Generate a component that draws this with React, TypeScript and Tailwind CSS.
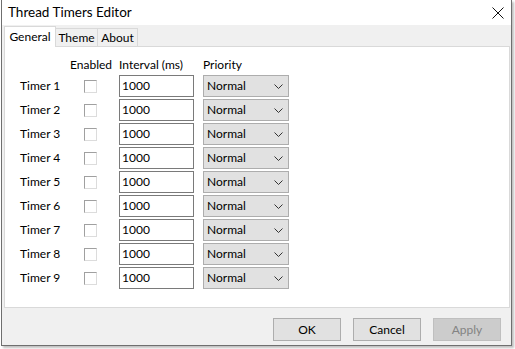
import React from "react";

const timers = [1, 2, 3, 4, 5, 6, 7, 8, 9];

const Chevron = () => (
  <svg width="9" height="5" viewBox="0 0 9 5" className="block">
    <path d="M0.5 0.5 L4.5 4.5 L8.5 0.5" fill="none" stroke="#333" strokeWidth="1" />
  </svg>
);

const TimerRow = ({ n }: { n: number }) => (
  <div className="flex items-center h-[22px] mb-[2px]">
    <div className="w-[79px] pl-[15px] text-[#000]">Timer {n}</div>
    <div className="w-[35px] flex">
      <div className="w-[13px] h-[13px] bg-white border border-t-[#a0a0a0] border-l-[#a0a0a0] border-b-[#dcdcdc] border-r-[#dcdcdc]" />
    </div>
    <div className="w-[75px] h-[22px] border border-[#7a7a7a] bg-white flex items-center pl-[2px]">
      1000
    </div>
    <div className="w-[9px]" />
    <div className="w-[86px] h-[22px] border border-[#adadad] bg-[#e1e1e1] flex items-center justify-between pl-[3px] pr-[5px]">
      <span>Normal</span>
      <Chevron />
    </div>
  </div>
);

const Btn = ({ label, disabled }: { label: string; disabled?: boolean }) => (
  <div
    className={
      "w-[68px] h-[23px] flex items-center justify-center border " +
      (disabled
        ? "bg-[#cccccc] border-[#bfbfbf] text-[#838383]"
        : "bg-[#e1e1e1] border-[#adadad] text-black")
    }
  >
    {label}
  </div>
);

export default function App() {
  return (
    <div
      className="w-[515px] h-[349px] bg-white text-[12px] text-black overflow-hidden"
      style={{ fontFamily: "Lato, 'Noto Sans', sans-serif" }}
    >
      <div className="ml-[1px] w-[511px] h-[346px] flex flex-col border-l border-r border-b border-[#6f6f6f] shadow-[2px_2px_2px_rgba(0,0,0,0.25)]">
        <div className="h-[25px] bg-white flex items-center justify-between pl-[6px] pr-[7px] shrink-0">
          <span className="text-[13.5px]">Thread Timers Editor</span>
          <svg width="12" height="12" viewBox="0 0 12 12">
            <path d="M0.5 0.5 L11.5 11.5 M11.5 0.5 L0.5 11.5" stroke="#111" strokeWidth="1" />
          </svg>
        </div>
        <div className="flex-1 bg-[#f0f0f0] flex flex-col">
          <div className="flex items-end h-[21px] ml-[2px]">
            <div className="h-[21px] w-[52px] bg-white border border-b-0 border-[#d9d9d9] flex items-center justify-center relative top-[1px] z-10">
              General
            </div>
            <div className="h-[18px] w-[42px] bg-[#f0f0f0] border border-l-0 border-b-0 border-[#d9d9d9] flex items-center justify-center">
              Theme
            </div>
            <div className="h-[18px] w-[40px] bg-[#f0f0f0] border border-l-0 border-b-0 border-[#d9d9d9] flex items-center justify-center">
              About
            </div>
          </div>
          <div className="ml-[2px] w-[506px] h-[262px] bg-white border border-[#d9d9d9] pt-[10px]">
            <div className="flex items-center h-[16px] mb-[2px] pl-[65px]">
              <div className="w-[49px]">Enabled</div>
              <div className="w-[84px]">Interval (ms)</div>
              <div>Priority</div>
            </div>
            {timers.map((n) => (
              <TimerRow key={n} n={n} />
            ))}
          </div>
          <div className="flex justify-end gap-[12px] pr-[10px] pt-[10px]">
            <Btn label="OK" />
            <Btn label="Cancel" />
            <Btn label="Apply" disabled />
          </div>
        </div>
      </div>
    </div>
  );
}
